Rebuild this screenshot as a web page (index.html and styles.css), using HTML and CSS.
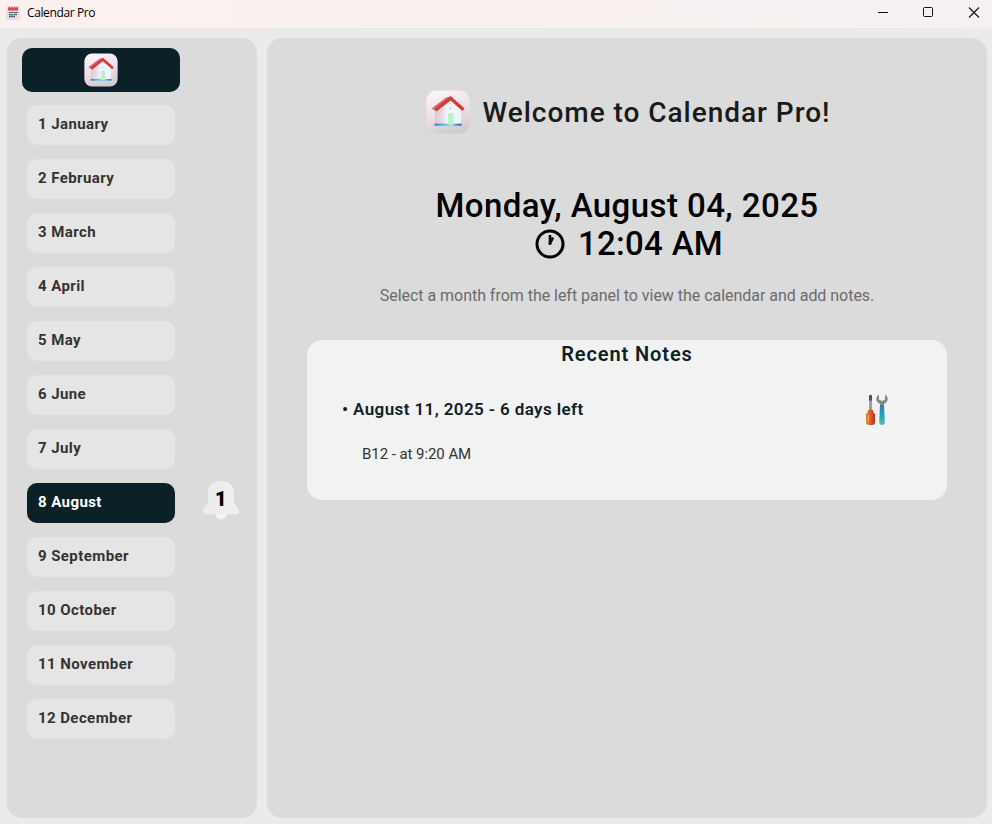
FILE: index.html
```html
<!DOCTYPE html>
<html lang="en">
<head>
<meta charset="utf-8">
<title>Calendar Pro</title>
<link rel="stylesheet" href="styles.css">
</head>
<body>
<svg class="defs" width="0" height="0" aria-hidden="true">
  <defs>
    <linearGradient id="tile" x1=".3" y1="0" x2=".6" y2="1"><stop offset="0" stop-color="#faf5fa"/><stop offset=".5" stop-color="#eee0e8"/><stop offset="1" stop-color="#cfcbd3"/></linearGradient>
    <linearGradient id="wall" x1="0" x2="1"><stop offset="0" stop-color="#e3c5cf"/><stop offset=".3" stop-color="#e9dfea"/><stop offset=".5" stop-color="#f5f7fd"/><stop offset="1" stop-color="#f1f1fa"/></linearGradient>
    <linearGradient id="base" x1="0" x2="1"><stop offset="0" stop-color="#3b7cc5"/><stop offset=".4" stop-color="#55d6e6"/><stop offset=".65" stop-color="#62d8e2"/><stop offset="1" stop-color="#3568bb"/></linearGradient>
    <linearGradient id="handle" x1="0" x2="1"><stop offset="0" stop-color="#e8873a"/><stop offset=".5" stop-color="#dd5c2e"/><stop offset="1" stop-color="#ae3226"/></linearGradient>
    <linearGradient id="wrench" x1="0" y1="0" x2="0" y2="1"><stop offset="0" stop-color="#2f7fab"/><stop offset=".5" stop-color="#20a3bd"/><stop offset="1" stop-color="#54c5b1"/></linearGradient>
    <linearGradient id="bell" x1="0" x2="1"><stop offset="0" stop-color="#ececec"/><stop offset="1" stop-color="#f0f0f0"/></linearGradient>
    <symbol id="house" viewBox="0 0 44 44">
      <rect x=".5" y=".5" width="43" height="43" rx="10" fill="url(#tile)"/>
      <path d="M9 18 24 9l11 10v16H9z" fill="url(#wall)"/>
      <rect x="8.500" y="33.600" width="27" height="2.200" fill="url(#base)"/>
      <rect x="22" y="23" width="5.500" height="12" fill="#baf2cd"/>
      <path d="m24.500 16.800 1.500 1.700-1.500 1.700-1.500-1.700zM12 26l1 2-1 2-1-2z" fill="#b9e3fa"/>
      <path d="M5.500 18.500 20 7.500l5-1L24.500 10 10.500 21.500z" fill="#d86d6c"/>
      <path d="m9.500 20 15-11.700 13 11.400" fill="none" stroke="#d63c36" stroke-width="3.400"/>
    </symbol>
  </defs>
</svg>
<header class="titlebar">
  <svg class="app-icon" viewBox="0 0 14 14" width="14" height="14">
    <rect width="14" height="14" rx="3" fill="#e5dce4"/>
    <path d="M2 1.500h10V4.500H2z" fill="#de4b4f"/><path d="M3.500 .8v1.500m2.500-1.500v1.500m2.500-1.500v1.500M11 .8v1.500" stroke="#b93b45" stroke-width=".8"/>
    <path d="M3 6.500h9M3 8.700h8M3 10.700h6" stroke="#32485b" stroke-width="1.200" stroke-dasharray="1.800 .6"/>
    <path d="M5 8.300h2v1.500H5z" fill="#46ae74"/><path d="M9 6h1.500v1.500H9z" fill="#4a8fd0"/>
  </svg>
  <span class="app-name">Calendar Pro</span>
  <svg class="controls" width="103" height="12" viewBox="0 0 103 12" fill="none" stroke="#111">
    <path d="M0 5.500h10" /><rect x="45.500" y=".5" width="9" height="9" rx="1"/><path d="m91 .5 10 10m0-10-10 10" stroke-width="1.100"/>
  </svg>
</header>
<div class="shell">
  <nav class="sidebar">
    <button class="home"><svg width="34" height="34"><use href="#house"/></svg></button>
    <ul class="months">
      <li class="month">1 January</li>
      <li class="month">2 February</li>
      <li class="month">3 March</li>
      <li class="month">4 April</li>
      <li class="month">5 May</li>
      <li class="month">6 June</li>
      <li class="month">7 July</li>
      <li class="month active">8 August
        <span class="badge"><svg width="38" height="40" viewBox="0 0 38 40">
          <circle cx="19" cy="34" r="5.500" fill="#f5f5f5"/>
          <path d="M19 1C11 1 6 6 6 13v8c0 4-4.500 6.500-5.300 10-.4 2 .8 3.300 2.800 3.300h31c2 0 3.200-1.300 2.800-3.300C36.500 27.500 32 25 32 21v-8C32 6 27 1 19 1z" fill="url(#bell)"/>
        </svg><b>1</b></span>
      </li>
      <li class="month">9 September</li>
      <li class="month">10 October</li>
      <li class="month">11 November</li>
      <li class="month">12 December</li>
    </ul>
  </nav>
  <main class="content">
    <h1 class="welcome"><svg width="44" height="44"><use href="#house"/></svg><span>Welcome to Calendar Pro!</span></h1>
    <div class="date">Monday, August 04, 2025</div>
    <div class="time">
      <svg width="30" height="30" viewBox="0 0 30 30" fill="none" stroke="#000"><circle cx="15" cy="15" r="13" stroke-width="3"/><path d="M15 6v9.500" stroke-width="2.600"/><path d="m14.500 15.500 3.500-7" stroke-width="2.600"/></svg>
      <span>12:04 AM</span>
    </div>
    <p class="hint">Select a month from the left panel to view the calendar and add notes.</p>
    <section class="notes">
      <h2>Recent Notes</h2>
      <div class="note-head">
        <span class="note-date">• August 11, 2025 - 6 days left</span>
        <svg width="24" height="34" viewBox="0 0 24 34">
          <path d="M4 2.500Q5.500 .8 7 2.500v4L6.500 8v9h-2V8L4 6.500z" fill="#4d4f53"/>
          <path d="M4.500 8h2v9h-2z" fill="#9a9ea3"/>
          <path d="M3 17h5l.5 2.500L10 21v8q0 3-3 3H4q-3 0-3-3v-8l1.500-1.500z" fill="url(#handle)"/>
          <path d="M3.500 22v7" stroke="#f3ad54"/>
          <path d="M14 1.500q-3.500 2-2.500 6 1 2.500 3.500 3.200V14h4v-3.300q2.500-.7 3.500-3.200 1-4-2.500-6v5L17 8l-3-1.500z" fill="#84898e"/>
          <path d="M15 12h4l.8 17q0 3-2.800 3t-2.800-3z" fill="url(#wrench)"/>
        </svg>
      </div>
      <div class="note-text">B12 - at 9:20 AM</div>
    </section>
  </main>
</div>
</body>
</html>
```
FILE: styles.css
```css
* { box-sizing: border-box; }
body {
  margin: 0;
  width: 992px;
  height: 824px;
  overflow: hidden;
  display: flex;
  flex-direction: column;
  background: #ebebeb;
  font-family: Roboto, sans-serif;
}
svg { display: block; flex: none; }
.defs { position: absolute; }
.titlebar {
  height: 28px;
  flex: none;
  display: flex;
  align-items: center;
  padding: 0 11px 2px 6px;
  background: linear-gradient(90deg, #faf0ef, #f6f1f1);
}
.app-name {
  margin-left: 7px;
  font: 12px/16px "Open Sans", sans-serif;
  letter-spacing: -0.38px;
  color: #000;
}
.controls { margin-left: auto; }
.shell {
  flex: 1;
  display: flex;
  gap: 10px;
  padding: 10px 5px 6px 7px;
}
.sidebar {
  width: 250px;
  padding: 10px 15px;
  background: #dbdbdb;
  border-radius: 15px;
}
.home {
  width: 158px;
  height: 44px;
  padding: 0;
  border: 0;
  border-radius: 10px;
  background: #0c2127;
  display: flex;
  align-items: center;
  justify-content: center;
}
.months {
  list-style: none;
  margin: 13px 0 0 5px;
  padding: 0;
  display: grid;
  gap: 14px;
}
.month {
  position: relative;
  width: 148px;
  height: 40px;
  padding-left: 11px;
  border-radius: 10px;
  background: #e5e5e5;
  color: #333;
  font-size: 15px;
  font-weight: 700;
  line-height: 38px;
  letter-spacing: 0.42px;
}
.month.active { background: #0c2127; color: #fff; }
.badge {
  position: absolute;
  left: 175px;
  top: -3px;
  width: 38px;
  height: 40px;
}
.badge b {
  position: absolute;
  inset: 0;
  text-align: center;
  color: #000;
  font-size: 20px;
  line-height: 38px;
}
.content {
  flex: 1;
  padding: 52px 40px 0;
  background: #dbdbdb;
  border-radius: 15px;
}
.welcome {
  margin: 0 0 0 2px;
  height: 44px;
  display: flex;
  align-items: center;
  justify-content: center;
  gap: 13px;
  color: #1a1a1a;
  font-size: 28px;
  font-weight: 500;
  letter-spacing: 0.97px;
}
.date, .time {
  height: 38px;
  display: flex;
  align-items: center;
  justify-content: center;
  color: #000;
  font-size: 33px;
  font-weight: 500;
  letter-spacing: 0.43px;
}
.date { margin-top: 52px; }
.time {
  gap: 13px;
  padding-left: 4px;
  letter-spacing: 0.3px;
}
.time svg { margin-top: 2px; }
.hint {
  margin: 24px 0 0;
  color: #6b6b6b;
  font-size: 16px;
  line-height: 20px;
  letter-spacing: -0.03px;
  text-align: center;
}
.notes {
  margin-top: 34px;
  height: 160px;
  border-radius: 15px;
  background: #f2f2f2;
}
.notes h2 {
  margin: 0;
  color: #0c2127;
  font-size: 20px;
  font-weight: 600;
  line-height: 28px;
  letter-spacing: 0.9px;
  text-align: center;
}
.note-head {
  display: flex;
  align-items: center;
  justify-content: space-between;
  height: 34px;
  margin-top: 25px;
  padding: 0 58px 0 35px;
}
.note-date {
  color: #0c2127;
  font-size: 17px;
  font-weight: 600;
  letter-spacing: 0.4px;
  margin-top: -2px;
}
.note-text {
  margin: 17px 0 0 55px;
  color: #333;
  font-size: 15px;
  line-height: 20px;
  letter-spacing: -0.06px;
}
```
